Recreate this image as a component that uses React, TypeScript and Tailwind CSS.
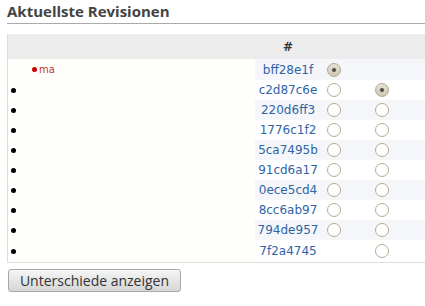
import React from "react";

const rows = [
  { h: "bff28e1f", r1: "checked", r2: "none" },
  { h: "c2d87c6e", r1: "empty", r2: "checked" },
  { h: "220d6ff3", r1: "empty", r2: "empty" },
  { h: "1776c1f2", r1: "empty", r2: "empty" },
  { h: "5ca7495b", r1: "empty", r2: "empty" },
  { h: "91cd6a17", r1: "empty", r2: "empty" },
  { h: "0ece5cd4", r1: "empty", r2: "empty" },
  { h: "8cc6ab97", r1: "empty", r2: "empty" },
  { h: "794de957", r1: "empty", r2: "empty" },
  { h: "7f2a4745", r1: "none", r2: "empty" },
];

function Radio({ state }: { state: string }) {
  if (state === "none") return null;
  if (state === "checked")
    return (
      <span className="flex h-[14px] w-[14px] items-center justify-center rounded-full border border-[#b3a78f] bg-gradient-to-b from-[#e6e0d6] to-[#cfc6b6]">
        <span className="h-[4px] w-[4px] rounded-full bg-[#4a4a4a]" />
      </span>
    );
  return <span className="block h-[14px] w-[14px] rounded-full border border-[#b9a98e] bg-white" />;
}

export default function App() {
  return (
    <div className="h-[306px] w-[425px] overflow-hidden bg-white" style={{ fontFamily: "'DejaVu Sans', sans-serif" }}>
      <h2
        className="ml-[7px] h-[24px] border-b border-[#aaaaaa] pt-[1px] text-[15px] font-bold leading-[20px] text-[#444444]"
        style={{ fontFamily: "'Open Sans', sans-serif" }}
      >
        Aktuellste Revisionen
      </h2>
      <div className="ml-[7px] mt-[10px] border-b border-l border-[#dddddd]">
        <div className="grid h-[25px] grid-cols-[247px_66px_26px_70px_1fr] items-center bg-[#ececec]">
          <div />
          <div className="text-center text-[12px] font-bold text-[#333]">#</div>
          <div />
          <div />
          <div />
        </div>
        {rows.map((r, i) => (
          <div
            key={r.h}
            className={`grid grid-cols-[247px_66px_26px_70px_1fr] items-center ${i === 0 ? "h-[21px]" : i === rows.length - 1 ? "h-[22px]" : "h-[20px]"}`}
          >
            <div className="flex h-full items-center bg-[#fefefa]">
              {i === 0 ? (
                <div className="ml-[24px] flex items-center">
                  <span className="h-[5px] w-[5px] rounded-full bg-[#cc0000]" />
                  <span className="ml-[2px] text-[10px] leading-[12px] text-[#c0392b]">ma</span>
                </div>
              ) : (
                <span className="ml-[3px] h-[5px] w-[5px] rounded-full bg-black" />
              )}
            </div>
            <div className={`flex h-full items-center justify-center text-[12px] text-[#2f64a6] ${i % 2 === 0 ? "bg-[#f4f6f9]" : "bg-white"}`}>
              {r.h}
            </div>
            <div className={`flex h-full items-center justify-center ${i % 2 === 0 ? "bg-[#f4f6f9]" : "bg-white"}`}>
              <Radio state={r.r1} />
            </div>
            <div className={`flex h-full items-center justify-center ${i % 2 === 0 ? "bg-[#f4f6f9]" : "bg-white"}`}>
              <Radio state={r.r2} />
            </div>
            <div className={`h-full ${i % 2 === 0 ? "bg-[#f4f6f9]" : "bg-white"}`} />
          </div>
        ))}
      </div>
      <button
        className="ml-[8px] mt-[6px] h-[23px] w-[173px] rounded-[3px] border border-[#a8a8a8] bg-gradient-to-b from-[#f6f6f6] to-[#d6d6d6] text-[14px] leading-[20px] text-[#333]"
        style={{ fontFamily: "'Open Sans', sans-serif" }}
      >
        Unterschiede anzeigen
      </button>
    </div>
  );
}
